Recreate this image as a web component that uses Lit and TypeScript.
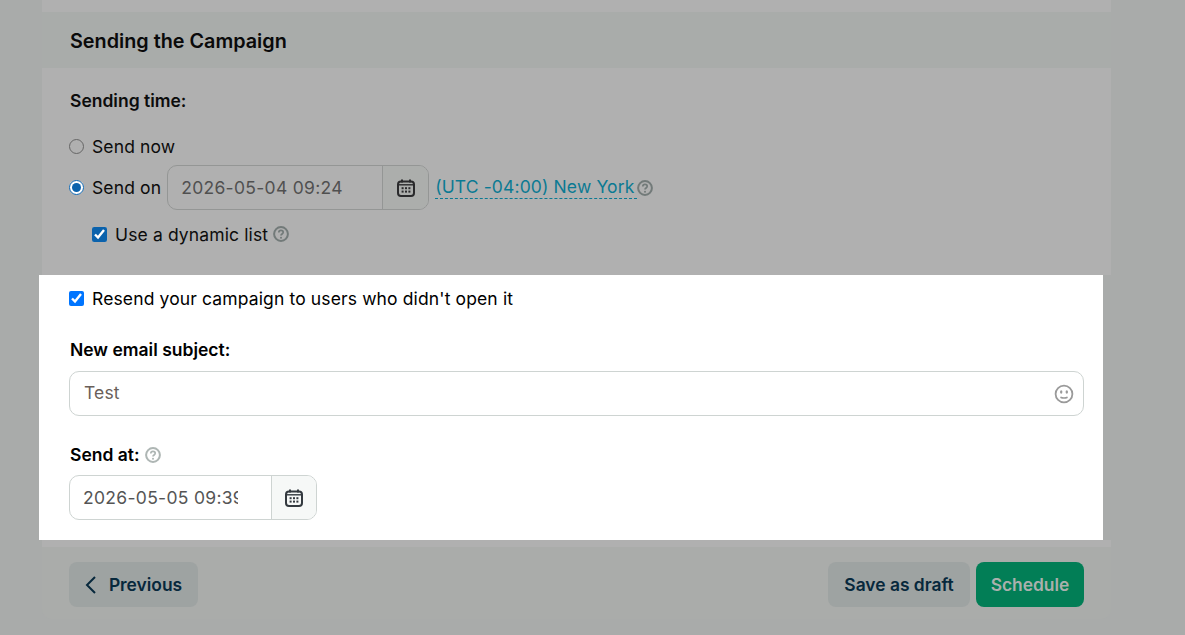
import { LitElement, html, css, svg } from "lit";
import { customElement } from "lit/decorators.js";

const help = (c: string) => html`<svg class="help" viewBox="0 0 16 16" fill="none" stroke=${c}>
  <circle cx="8" cy="8" r="6.9" stroke-width="2"/>
  <path d="M5.8 6.4c0-1.3 1-2.1 2.2-2.1s2.2.8 2.2 2c0 1.7-2.2 1.6-2.2 3.2" stroke-width="1.7"/>
  <circle cx="8" cy="11.7" r="1" fill=${c} stroke="none"/>
</svg>`;

const cal = (c: string) => html`<svg class="cal" viewBox="0 0 20 20" fill="none">
  <rect x="2" y="3.4" width="16" height="14.6" rx="3" stroke=${c} stroke-width="2"/>
  <path d="M6 1.6v3M14 1.6v3" stroke=${c} stroke-width="2"/>
  <path d="M2.6 6.8h14.8" stroke=${c} stroke-width="1.4"/>
  ${[6.6, 10, 13.4].flatMap((x) =>
    [10.2, 13.6].map((y) => svg`<rect x=${x - 1} y=${y - 1} width="2" height="2" fill=${c}/>`)
  )}
</svg>`;

@customElement("app-root")
export class AppRoot extends LitElement {
  static styles = css`
    :host {
      display: block;
      width: 1185px;
      height: 635px;
      overflow: hidden;
      background: #a9abaa;
      font-family: Inter, "Liberation Sans", sans-serif;
      font-size: 17.5px;
      letter-spacing: 0.13px;
      color: #000;
    }
    .panel {
      width: 1069px;
      margin-left: 42px;
    }
    .strip {
      height: 12px;
      background: #b0b0b0;
    }
    .head {
      height: 56px;
      box-sizing: border-box;
      padding: 2px 0 0 28px;
      background: #a9acaa;
      display: flex;
      align-items: center;
      font-size: 19.8px;
      letter-spacing: 0;
      font-weight: 600;
      color: #0a0a0a;
    }
    .dim {
      height: 207px;
      box-sizing: border-box;
      background: #b0b0b0;
      padding: 23px 0 0 27px;
      color: #0c0c0c;
    }
    .label {
      font-size: 17.5px;
      letter-spacing: 0;
      font-weight: 600;
      line-height: 20px;
      margin-left: 1px;
    }
    .row {
      display: flex;
      align-items: center;
    }
    .now {
      height: 20px;
      margin-top: 25px;
    }
    .on {
      height: 45px;
      margin-top: 9px;
    }
    .dyn {
      height: 20px;
      margin: 14px 0 0 23px;
    }
    input {
      margin: 0;
      width: 15px;
      height: 15px;
      flex: none;
    }
    .dim input {
      accent-color: #0b62ac;
    }
    .dim input.off {
      appearance: none;
      box-sizing: border-box;
      border: 1px solid #666;
      border-radius: 50%;
      background: #b0b0b0;
    }
    .text {
      margin-left: 8px;
      white-space: nowrap;
    }
    .date {
      display: flex;
      box-sizing: border-box;
      border: 1px solid #949695;
      border-radius: 10px;
      height: 45px;
      width: 262px;
      margin-left: 6px;
      color: #505050;
    }
    .value {
      box-sizing: border-box;
      padding-left: 13px;
      display: flex;
      align-items: center;
      white-space: nowrap;
      letter-spacing: 0.3px;
    }
    .date .value {
      width: 214px;
    }
    .clip {
      display: block;
      overflow: hidden;
      width: 155px;
    }
    .btn-cal {
      flex: 1;
      display: flex;
      align-items: center;
      justify-content: center;
      border-left: 1px solid #949695;
      border-radius: 0 9px 9px 0;
      background: #acaeac;
    }
    .cal {
      width: 20px;
      height: 20px;
    }
    .tz {
      margin-left: 6px;
      color: #0b7a93;
      border-bottom: 1px dashed #0b7a93;
      line-height: 22px;
      width: 202px;
      white-space: nowrap;
    }
    .help {
      width: 16px;
      height: 16px;
      flex: none;
    }
    .dyn .help {
      margin-left: 5px;
    }
    .lit {
      width: 1064px;
      height: 265px;
      box-sizing: border-box;
      margin-left: -3px;
      background: #fff;
      padding: 13px 19px 0 30px;
    }
    .resend {
      height: 20px;
    }
    .lit .label {
      margin-top: 32px;
    }
    .subject {
      box-sizing: border-box;
      height: 45px;
      margin-top: 11px;
      border: 1px solid #ced4d2;
      border-radius: 10px;
      display: flex;
      align-items: center;
      justify-content: space-between;
      padding: 0 9px 2px 14px;
      color: #6a5f5a;
    }
    .smile {
      width: 20px;
      height: 20px;
      margin-top: 2px;
    }
    .lit .sendat {
      margin-top: 29px;
      gap: 5px;
      display: flex;
      align-items: center;
    }
    .date.small {
      width: 248px;
      height: 45px;
      margin: 10px 0 0;
      border-color: #ced4d2;
      color: #555;
    }
    .date.small .value {
      width: 201px;
    }
    .date.small .btn-cal {
      background: #f6f8f7;
      border-left-color: #ced4d2;
    }
    .tail {
      height: 7px;
      background: #b0b0b0;
    }
    .foot {
      height: 72px;
      box-sizing: border-box;
      background: #aaacaa;
      border-radius: 0 0 10px 10px;
      padding: 15px 27px 0;
      display: flex;
      align-items: flex-start;
    }
    .btn {
      height: 45px;
      box-sizing: border-box;
      border-radius: 8px;
      display: flex;
      align-items: center;
      justify-content: center;
      background: #9ea3a2;
      color: #07283c;
      font-size: 17.4px;
      letter-spacing: 0;
      font-weight: 600;
    }
    .prev {
      width: 129px;
      gap: 12px;
    }
    .prev svg {
      width: 12px;
      height: 20px;
    }
    .draft {
      width: 142px;
      margin-left: auto;
    }
    .go {
      width: 108px;
      margin-left: 6px;
      background: #027e56;
      color: #aab0ad;
    }
  `;

  render() {
    return html`<div class="panel">
      <div class="strip"></div>
      <div class="head">Sending the Campaign</div>
      <div class="dim">
        <div class="label">Sending time:</div>
        <div class="row now"><input class="off" type="radio" name="t" /><span class="text">Send now</span></div>
        <div class="row on">
          <input type="radio" name="t" checked /><span class="text">Send on</span>
          <div class="date">
            <div class="value">2026-05-04 09:24</div>
            <div class="btn-cal">${cal("#2a2a2c")}</div>
          </div>
          <span class="tz">(UTC -04:00) New York</span>${help("#727a79")}
        </div>
        <div class="row dyn">
          <input type="checkbox" checked /><span class="text">Use a dynamic list</span>${help("#727a79")}
        </div>
      </div>
      <div class="lit">
        <div class="row resend">
          <input type="checkbox" checked /><span class="text">Resend your campaign to users who didn't open it</span>
        </div>
        <div class="label">New email subject:</div>
        <div class="subject">
          <span>Test</span>
          <svg class="smile" viewBox="0 0 20 20" fill="none" stroke="#9a9a9a" stroke-width="1.8">
            <circle cx="10" cy="10" r="8.4" />
            <ellipse cx="7.2" cy="8" rx="1.2" ry="1.8" fill="#9a9a9a" stroke="none" />
            <ellipse cx="12.8" cy="8" rx="1.2" ry="1.8" fill="#9a9a9a" stroke="none" />
            <path d="M6.4 13.2c2 .9 5.2.9 7.2 0" stroke-width="1.6" />
          </svg>
        </div>
        <div class="label sendat">Send at: ${help("#aeb6b4")}</div>
        <div class="date small">
          <div class="value"><span class="clip">2026-05-05 09:39</span></div>
          <div class="btn-cal">${cal("#33393f")}</div>
        </div>
      </div>
      <div class="tail"></div>
      <div class="foot">
        <div class="btn prev">
          <svg viewBox="0 0 12 20" fill="none" stroke="#07283c" stroke-width="2"><path d="M10 2 2 10l8 8" /></svg>
          Previous
        </div>
        <div class="btn draft">Save as draft</div>
        <div class="btn go">Schedule</div>
      </div>
    </div>`;
  }
}
